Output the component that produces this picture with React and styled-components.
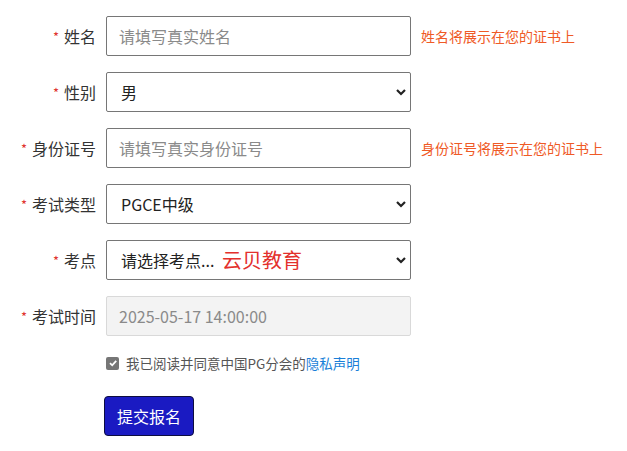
import React from 'react'
import styled, { createGlobalStyle } from 'styled-components'

const GlobalStyle = createGlobalStyle`
  body {
    margin: 0;
    background: #fff;
    font-family: "Noto Sans CJK SC", "Noto Sans", sans-serif;
  }
`

const Form = styled.form`
  display: flex;
  flex-direction: column;
  gap: 16px;
  padding: 16px 0 0 0;
`

const Row = styled.div`
  display: grid;
  grid-template-columns: 96px 305px auto;
  column-gap: 10px;
  align-items: center;
  height: 40px;
`

const Label = styled.label`
  justify-self: end;
  font-size: 16px;
  color: #333;
  white-space: nowrap;

  .star {
    color: #e0332f;
    font-size: 13px;
    margin-right: 5px;
    vertical-align: 1px;
  }
`

const fieldBase = `
  box-sizing: border-box;
  width: 305px;
  height: 40px;
  border: 1px solid #767676;
  border-radius: 2px;
  font-family: "Noto Sans CJK SC", "Noto Sans", sans-serif;
  font-size: 16px;
  color: #222;
  background: #fff;
  outline: none;
`

const Input = styled.input`
  ${fieldBase}
  padding: 0 12px;

  &::placeholder {
    color: #8a8a8a;
  }

  &:disabled {
    background: #f3f3f3;
    border-color: #d9d9d9;
    color: #8a8a8a;
  }
`

const SelectWrap = styled.div`
  position: relative;
  width: 305px;
  height: 40px;
`

const Select = styled.select`
  ${fieldBase}
  appearance: none;
  padding: 0 30px 0 14px;
`

const Chevron = styled.svg`
  position: absolute;
  right: 3px;
  top: 15px;
  pointer-events: none;
`

const Watermark = styled.span`
  position: absolute;
  left: 116px;
  top: 5px;
  font-size: 20px;
  color: #e3302c;
  pointer-events: none;
`

const Hint = styled.span`
  font-size: 14px;
  color: #ef5a26;
  white-space: nowrap;
`

const AgreeRow = styled.div`
  display: flex;
  align-items: center;
  gap: 7px;
  margin: 1px 0 0 106px;
  font-size: 13.5px;
  line-height: 20px;
  color: #555;

  a {
    color: #1a7fd8;
    text-decoration: none;
  }
`

const Check = styled.span`
  width: 13px;
  height: 13px;
  border-radius: 2px;
  background: #767676;
  display: flex;
  align-items: center;
  justify-content: center;
`

const SubmitButton = styled.button`
  margin: 7px 0 0 104px;
  width: 90px;
  height: 40px;
  background: #1a1ac2;
  color: #fff;
  border: 1px solid #0d0d40;
  border-radius: 4px;
  font-family: "Noto Sans CJK SC", "Noto Sans", sans-serif;
  font-size: 16px;
  cursor: pointer;
`

const Star = () => <span className='star'>*</span>

const ChevronIcon = () => (
  <Chevron width='14' height='10' viewBox='0 0 14 10'>
    <path d='M3 3 L7 7 L11 3' fill='none' stroke='#222' strokeWidth='2.2' />
  </Chevron>
)

const SelectField = ({ value, options, children }) => (
  <SelectWrap>
    <Select defaultValue={value}>
      {options.map(o => <option key={o}>{o}</option>)}
    </Select>
    <ChevronIcon />
    {children}
  </SelectWrap>
)

const App = () => {
  return (
    <>
      <GlobalStyle />
      <Form onSubmit={e => e.preventDefault()}>
        <Row>
          <Label><Star />姓名</Label>
          <Input placeholder='请填写真实姓名' />
          <Hint>姓名将展示在您的证书上</Hint>
        </Row>
        <Row>
          <Label><Star />性别</Label>
          <SelectField value='男' options={['男', '女']} />
        </Row>
        <Row>
          <Label><Star />身份证号</Label>
          <Input placeholder='请填写真实身份证号' />
          <Hint>身份证号将展示在您的证书上</Hint>
        </Row>
        <Row>
          <Label><Star />考试类型</Label>
          <SelectField value='PGCE中级' options={['PGCE初级', 'PGCE中级', 'PGCE高级']} />
        </Row>
        <Row>
          <Label><Star />考点</Label>
          <SelectField value='请选择考点...' options={['请选择考点...']}>
            <Watermark>云贝教育</Watermark>
          </SelectField>
        </Row>
        <Row>
          <Label><Star />考试时间</Label>
          <Input disabled value='2025-05-17 14:00:00' readOnly />
        </Row>
        <AgreeRow>
          <Check>
            <svg width='10' height='10' viewBox='0 0 10 10'>
              <path d='M2 5.2 L4.2 7.3 L8.2 2.8' fill='none' stroke='#fff' strokeWidth='1.8' />
            </svg>
          </Check>
          <span>我已阅读并同意中国PG分会的<a href='#'>隐私声明</a></span>
        </AgreeRow>
        <SubmitButton type='submit'>提交报名</SubmitButton>
      </Form>
    </>
  )
}

export default App
